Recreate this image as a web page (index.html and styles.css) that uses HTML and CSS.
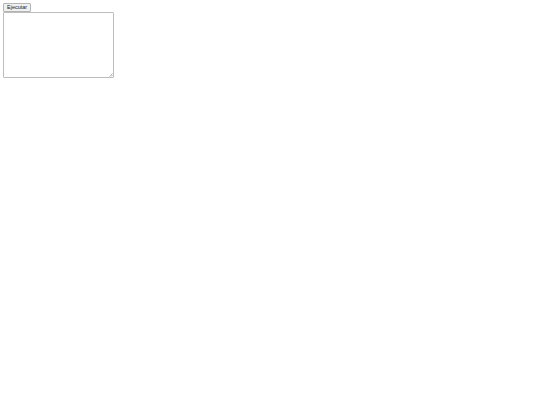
FILE: index.html
```html
<!DOCTYPE html>
<html lang="es">
<head>
<meta charset="utf-8">
<title>Ejecutar</title>
<link rel="stylesheet" href="styles.css">
</head>
<body>
<div class="runner">
  <button class="run-btn" type="button">Ejecutar</button>
  <div class="editor">
    <textarea class="code-input"></textarea>
    <svg class="grip" width="4" height="4" viewBox="0 0 4 4" aria-hidden="true">
      <path d="M0.5 3.5 L3.5 0.5 M2 3.5 L3.5 2" stroke="#9a9a9a" stroke-width="0.7" fill="none"/>
    </svg>
  </div>
</div>
</body>
</html>
```
FILE: styles.css
```css
html, body {
  background: #ffffff;
}

body {
  margin: 3px;
  font-family: "Liberation Sans", Arial, sans-serif;
}

.runner {
  display: flex;
  flex-direction: column;
  align-items: flex-start;
}

.run-btn {
  box-sizing: border-box;
  height: 9px;
  padding: 0 3px;
  margin: 0;
  font-family: "Liberation Sans", Arial, sans-serif;
  font-size: 5.5px;
  line-height: 7px;
  color: #1a1a1a;
  background: #f0f0f0;
  border: 1px solid #b4b4b4;
  border-radius: 1px;
  white-space: nowrap;
}

.editor {
  position: relative;
  width: 111px;
  height: 66px;
}

.code-input {
  display: block;
  box-sizing: border-box;
  width: 111px;
  height: 66px;
  margin: 0;
  padding: 1px;
  border: 1px solid #bdbdbd;
  border-radius: 1px;
  background: #ffffff;
  font-size: 5px;
  resize: none;
}

/* small resize grip in the lower-right corner */
.grip {
  position: absolute;
  right: 1px;
  bottom: 1px;
}
```
